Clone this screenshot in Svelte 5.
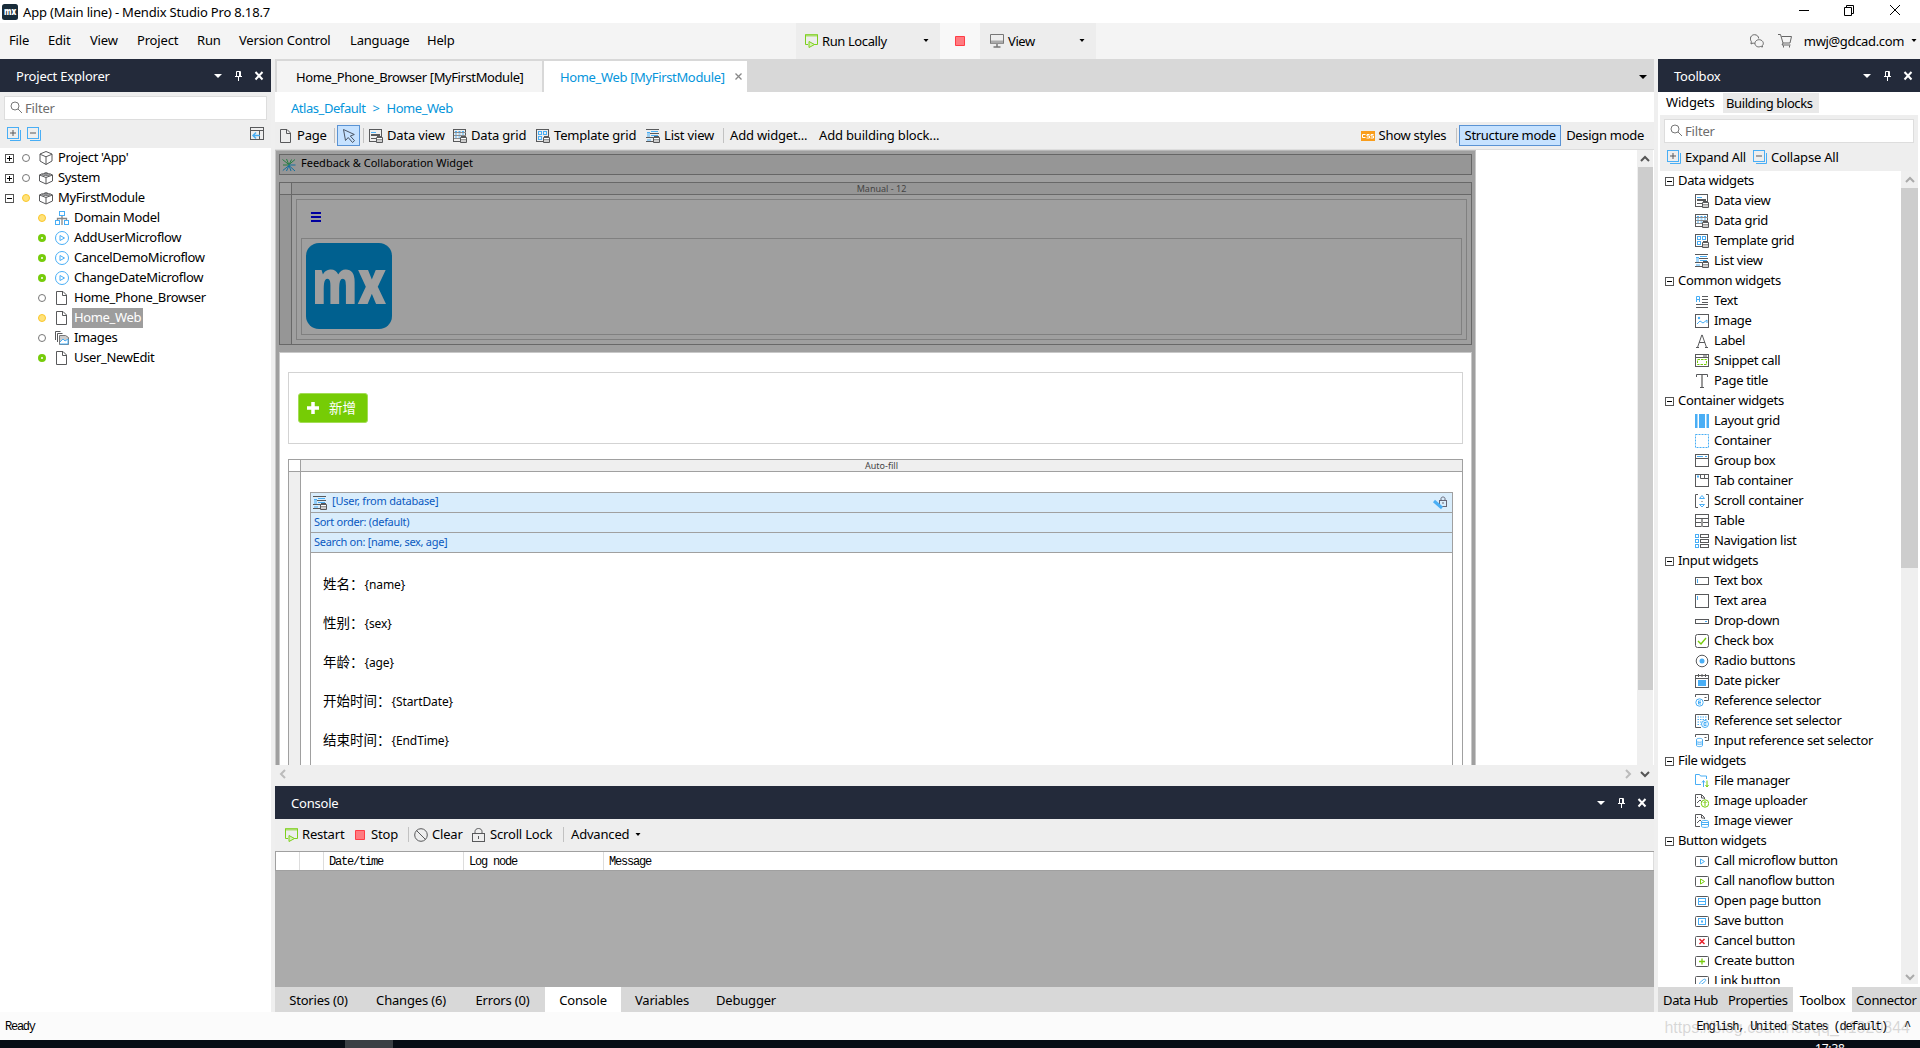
<script>
  // Icon bodies are drawn on a 14x14 pixel grid.
  const D = '#58595b', B = '#49aef5', G = '#76cc0a';
  const db = `<path d="M7.5 8.5h6v5h-6z" fill="#fff" stroke="${D}"/><path d="M8 10.5h5M8 12h5" stroke="#999"/><path d="M8 7.500h5" stroke="${D}"/>`;
  const r = (x, y, w, h, s = D, f = 'none') => `<rect x="${x}" y="${y}" width="${w}" height="${h}" stroke="${s}" fill="${f}"/>`;
  const p = (d, s = D, f = 'none', e = '') => `<path d="${d}" stroke="${s}" fill="${f}" ${e}/>`;
  const btn = r(.5, 2.5, 13, 10).replace('/>', ' rx="1"/>');
  const icons = {
    dataview: r(.5, .5, 12, 12) + p('M2 3.5h5', B) + p('M2 5.5h9M2 6.5h9M2 9.5h5') + db,
    datagrid: r(.5, .5, 12, 12) + p('M1 3.5h12M1 6.5h12M1 9.5h12', '#8a8b8d') + p('M2 2.5h9M2 5h9M2 8h9', B, 'none', 'stroke-dasharray="2 1.5"') + db,
    template: r(.5, .5, 12, 12) + r(2.5, 2.5, 3, 3, B) + r(7.5, 2.5, 3, 3, B) + r(2.5, 7.5, 3, 3, B) + db,
    list: p('M0 .5h13M4 4.5h9M0 8.5h8M0 12.5h7') + p('M1 3.5h3M1 5h3M1 7h3M5 2.5h7M5 6.5h7M1 11h4', B) + db,
    text: p('M7 2.5h6M7 5.5h6M7 8.5h6M1 10.5h12M1 13.5h12') + p('M1.5 8V2.5h3V8M1.5 5.5h3', B),
    image: r(.5, .5, 13, 13) + p('M2 10l3-3 3 2 4-3v3', B) + `<circle cx="4" cy="4" r="1.2" fill="${B}"/>`,
    label: p('M2.5 13.5L6.8 1h.4L11.5 13.5M4 8.5h6M1 13.5h3M10 13.5h3'),
    snippet: r(.5, .5, 13, 12) + p('M1 3.5h12M8 2h4') + p('M2.5 5.5h9v5h-9z', G, 'none', 'stroke-dasharray="2.5 1"'),
    title: p('M1.5 3V.5h11V3M5 13.5h4') + p('M7 1v12', '#999', 'none', 'stroke-width="2"'),
    layout: `<path d="M0 0h2.5v14H0zM4 0h6v14H4zM11.500 0H14v14h-2.500z" fill="${B}"/>`,
    container: p('M.5.5h13v13H.5z', B, 'none', 'stroke-dasharray="2 1"'),
    group: r(.5, .5, 13, 12) + p('M1 4.500h12') + p('M2 2.500h6M10 2.500h2', B),
    tab: r(.5, .5, 13, 12) + p('M5.500 1v3.500h8M9.500 1v3') + p('M2 2.5h2', B, 'none', 'stroke-width="2"'),
    scroll: p('M3 .5H.5v13H3M11 .5h2.500v13H11') + p('M4.500 4.500L7 1.500l2.500 3zM4.500 10.500h5L7 13z', B) + p('M6.500 7.500h1'),
    table: r(.5, .5, 13, 12) + p('M1 4.500h12M1 8.500h12') + p('M7 5v8', '#999', 'none', 'stroke-width="2"'),
    nav: r(.5, .5, 3, 3, B) + r(.5, 5.5, 3, 3, B) + r(.5, 10.5, 3, 3, B) + r(5.5, .5, 8, 3) + r(5.5, 5.5, 8, 3) + r(5.5, 10.5, 8, 3),
    textbox: r(.5, 3.5, 13, 7) + p('M2.500 5v4', B),
    area: r(.5, .5, 13, 13) + p('M2.500 2v4', B),
    drop: r(.5, 5.5, 13, 4) + p('M10 7.500h2', B),
    check: r(.5, .5, 13, 13).replace('/>', ' rx="2"/>') + p('M3 7l3 3 5-6', G, 'none', 'stroke-width="1.4"'),
    radio: `<circle cx="7" cy="7" r="5.800" fill="none" stroke="${D}"/><circle cx="7" cy="7" r="2.500" fill="${B}"/>`,
    date: r(.5, 1.5, 13, 12) + p('M1 4.500h12M3.500 0v3M7 0v3M10.500 0v3') + `<path d="M3 6h8v6H3z" fill="${B}"/>`,
    ref: p('M.5 3V.5h13v6H9M9.500 3.500h2') + `<circle cx="4.500" cy="8.500" r="3.700" fill="#fff" stroke="${B}"/>` + p('M6 7H3.500v3H6M4 8.500h2', B),
    refset: p('M6 13.500H.5V.5h13V6') + p('M2.500 3h9M2.500 5.500h9M2.500 8h4M2.500 10.500h3', B, 'none', 'stroke-dasharray="1.500 1"') + `<circle cx="10" cy="10" r="3.500" fill="#fff" stroke="${B}"/>` + p('M11.500 8.500H9v3h2.500M9.500 10h2', B),
    inref: p('M.5 3V.5h13v6H10M9.500 3.500h2') + p('M1.500 5.500c0-1.500 6-1.500 6 0v6c0 1.500-6 1.500-6 0zM1.500 7.500c1 1 5 1 6 0M1.500 9.500c1 1 5 1 6 0', B),
    file: p('M6 10.500H.5V.5h4l1 1.500h6V5', B) + p('M8.500 13V7M7 8.500l1.500-2 1.500 2', B) + p('M12 6.500v6M10.500 11l1.500 2 1.500-2', G),
    upload: p('M5 12.500H.5V.5h6l3 3V5M6.500 1v3h3M2 9l3-3 2 2M2 3.500h1') + `<circle cx="10" cy="9.500" r="3.700" fill="#fff" stroke="${G}"/>` + p('M10 12V7.500M8.500 9l1.500-1.500L11.500 9', G),
    viewer: p('M5 12.500H.5V.5h6l3 3V5M6.500 1v3h3M2 9l3-3 2 2M2 3.500h1') + `<path d="M6.500 7.500c0-1.500 7-1.500 7 0v5c0 1.200-7 1.200-7 0z" fill="#fff" stroke="${B}"/>` + p('M6.500 8.500h7M6.500 10.500h7', B),
    micro: btn + p('M5.500 5l4 2.500-4 2.500z', B),
    nano: btn + p('M5.500 5l4 2.500-4 2.500z', G),
    open: btn + r(3.5, 4.5, 7, 6, B) + p('M4 7.500h6', B),
    save: btn + r(3.5, 4.5, 7, 6, B) + p('M6 7.500h2', B, 'none', 'stroke-width="2"'),
    cancel: btn + p('M4.500 5l5 5M9.500 5l-5 5', '#e8202a', 'none', 'stroke-width="1.500"'),
    create: btn + p('M7 4.500v6M4 7.500h6', G, 'none', 'stroke-width="1.300"'),
    link: btn + p('M5.500 8l3-2.500c2-1 3 .5 1.500 2L7 10c-2 1-3.500-.5-1.500-2z', B),
    page: p('M1.500.5h6.500l3.500 3.500v9.500h-10zM7.500 1v3.500h4', D),
    module: p('M7 .5L13 3v7l-6 3.500L1 10V3zM1 3.200l6 2.600 6-2.600M7 6v7.500', D),
    brick: p('M.5 4l6.500 2.500L13.500 4v6l-6.500 3-6.500-3zM7 6.500V13M.5 4l3-1.500M13.500 4l-3-1.500', D) + `<path d="M3 3.500c0-1.200 3.500-1.200 3.500 0v1.200L3 4zM7.500 3.500c0-1.200 3.500-1.200 3.500 0V4L7.500 5zM5 2.500c0-1.200 4-1.200 4 0z" fill="#aaa" stroke="${D}" stroke-width=".7"/>`,
    domain: r(4.5, .5, 5, 4, B) + r(.5, 9.5, 4, 4, B) + r(9.5, 9.5, 4, 4, B) + p('M7 5v3M2.500 9V7.500h9V9M7 8v6', '#888', 'none', 'stroke-width="1.300"'),
    flow: `<circle cx="7" cy="7" r="6.500" fill="none" stroke="${B}"/>` + p('M5 4.500L9.500 7 5 9.500z', B),
    images: p('M.5 9V.5h5M2.500 11V2.500h5') + `<path d="M4.500 4.500h6l3 2v7h-9z" fill="#ccc" stroke="#777"/>` + p('M5 11l3-3 2 2 3-2v5H5', B, '#fff'),
    expand: p('M3 13.500h10.500V3', B) + r(.5, .5, 11, 11, B) + p('M3 6h6M6 3v6'),
    collapse: p('M3 13.500h10.500V3', B) + r(.5, .5, 11, 11, B) + p('M3 6h6'),
    search: `<circle cx="5" cy="5" r="4" fill="none" stroke="#777"/>` + p('M8 8l4 4', '#777'),
    locate: r(.5, .5, 13, 12) + p('M1 3.500h12M9.500 4v8') + p('M3 8.500h7M6 5.500l-3 3 3 3', B, 'none', 'stroke-width="1.500"'),
    run: p('M3 10.500H.5v-10h12v10H9', '#7dcf1c') + p('M1 1.500h11', '#a8dc68', 'none', 'stroke-width="2"') + p('M4 7.500l5.500 3L4 13.500z', '#7dcf1c', '#d6f2b4'),
    stop: `<path d="M2.500 2.500h9v9h-9z" fill="#ff7b80" stroke="#ff3d46"/>`,
    monitor: p('M.5.5h13v9H.5z', '#777', '#eee') + p('M1 8h12', '#aaa', 'none', 'stroke-width="3"') + p('M7 10v3M3.500 13h7', '#777', 'none', 'stroke-width="1.500"'),
    cursor: p('M1.500.5l2 11 2.700-3 4.300 5 2-1.800-4.200-4.700 4-1.500z', '#4b5563'),
    css: `<path d="M0 2h14v10H0z" fill="#f99d1c"/>` + p('M4.500 5.500H1.500v3h3M8.500 5.500H6V7h2.500v2H5.500M12.500 5.500H10V7h2.500v2H9.500', '#fff'),
    chat: p('M3 9L1 10l.3-2.500C-.8 4.500 1 .7 4.500.7c2.500 0 4.200 1.800 4.200 3.800M3 9c1 .5 2 .3 2 .3', '#666') + p('M12.500 13l-2-.5c-3 1.300-6-.8-5.500-3.800.8-3.500 5.800-4 7.700-1.200 1 1.500.8 3-.5 4.200z', '#666'),
    cart: p('M0 .5h2.500L5 9h7l1.500-6.500h-10M5 9l-1 2h8.500', '#666') + p('M5 12.500h1M11 12.500h1', '#666', 'none', 'stroke-width="2"'),
    clear: `<circle cx="7" cy="7" r="6.300" fill="none" stroke="${D}"/>` + p('M2.500 2.500l9 9'),
    lock: r(.5, 5.5, 12, 8) + p('M3 5.500V3.500c0-4 7-4 7 0v2M6.500 8v3'),
    star: p('M6.800 6.500L.5 1.500M6.800 6.500L4.500 1M7.200 6.500L13 1.500M7.200 6.500L9.500 1.500M6.500 7H1', '#267d43') + p('M7 7h6.500M7 7.500l6 5.500M7 7.500l2 5.500M7 7.500L4.500 13M7 7.500L.8 12.500', '#156f9d'),
    editlock: r(6.5, 4.5, 7, 6, '#667') + p('M8 4.500V2.500c0-2 4-2 4 0v2M10 6v2', '#667') + p('M1 5l8 7', B, 'none', 'stroke-width="3"'),
    menu: `<path d="M0 0h10v2H0zM0 4h10v2H0zM0 8h10v2H0z" fill="#00009f"/>`
  };

  const menus = [['File', 39], ['Edit', 42], ['View', 47], ['Project', 60], ['Run', 42], ['Version Control', 111], ['Language', 77], ['Help', 40]];
  const roots = [['Project \'App\'', 'module', 'none', '+'], ['System', 'brick', 'none', '+'], ['MyFirstModule', 'brick', 'yellow', '-']];
  const docs = [
    ['Domain Model', 'domain', 'yellow'], ['AddUserMicroflow', 'flow', 'green'], ['CancelDemoMicroflow', 'flow', 'green'],
    ['ChangeDateMicroflow', 'flow', 'green'], ['Home_Phone_Browser', 'page', 'none'], ['Home_Web', 'page', 'yellow'],
    ['Images', 'images', 'none'], ['User_NewEdit', 'page', 'green']
  ];
  const tools = [['Data view', 'dataview', 84], ['Data grid', 'datagrid', 83], ['Template grid', 'template', 110], ['List view', 'list', 77]];
  const groups = [
    ['Data widgets', [['Data view', 'dataview'], ['Data grid', 'datagrid'], ['Template grid', 'template'], ['List view', 'list']]],
    ['Common widgets', [['Text', 'text'], ['Image', 'image'], ['Label', 'label'], ['Snippet call', 'snippet'], ['Page title', 'title']]],
    ['Container widgets', [['Layout grid', 'layout'], ['Container', 'container'], ['Group box', 'group'], ['Tab container', 'tab'], ['Scroll container', 'scroll'], ['Table', 'table'], ['Navigation list', 'nav']]],
    ['Input widgets', [['Text box', 'textbox'], ['Text area', 'area'], ['Drop-down', 'drop'], ['Check box', 'check'], ['Radio buttons', 'radio'], ['Date picker', 'date'], ['Reference selector', 'ref'], ['Reference set selector', 'refset'], ['Input reference set selector', 'inref']]],
    ['File widgets', [['File manager', 'file'], ['Image uploader', 'upload'], ['Image viewer', 'viewer']]],
    ['Button widgets', [['Call microflow button', 'micro'], ['Call nanoflow button', 'nano'], ['Open page button', 'open'], ['Save button', 'save'], ['Cancel button', 'cancel'], ['Create button', 'create'], ['Link button', 'link']]]
  ];
  const fields = [['姓名：', '{name}'], ['性别：', '{sex}'], ['年龄：', '{age}'], ['开始时间：', '{StartDate}'], ['结束时间：', '{EndTime}']];
  const bottomTabs = [['Stories (0)', 87], ['Changes (6)', 98], ['Errors (0)', 85], ['Console', 76], ['Variables', 82], ['Debugger', 86]];
</script>

{#snippet icon(name)}
  <svg class="ico" width="14" height="14" viewBox="0 0 14 14">{@html icons[name]}</svg>
{/snippet}
{#snippet caret()}<svg class="caret" width="6" height="4" viewBox="0 0 6 4"><path d="M.5 0h5L3 3z" fill="#000" /></svg>{/snippet}
{#snippet chevron(d, c)}
  <svg width="12" height="12" viewBox="0 0 12 12"><path {d} fill="none" stroke={c} stroke-width="2" /></svg>
{/snippet}
{#snippet panelHead(title)}
  <header class="phead">
    <span class="ptitle">{title}</span>
    <svg width="52" height="12" viewBox="0 0 52 12">
      <path d="M1 4h8L5 8z" fill="#fff" />
      <path d="M23.500 1.500h4v5h-4zM22 6.500h7M25.500 7v4M26.500 2v4" fill="none" stroke="#fff" />
      <path d="M42.500 2l7 7.500M49.500 2l-7 7.500" fill="none" stroke="#fff" stroke-width="2" />
    </svg>
  </header>
{/snippet}

<div class="window">
  <div class="titlebar">
    <svg class="app" width="16" height="16" viewBox="0 0 16 16">
      <rect width="16" height="16" rx="2.500" fill="#182b39" />
      <text x="2" y="11" textLength="12" lengthAdjust="spacingAndGlyphs" font-family="Open Sans" font-weight="800" font-size="10" fill="#fff">mx</text>
    </svg>
    <span class="wtitle">App (Main line) - Mendix Studio Pro 8.18.7</span>
    <svg class="winctl" width="112" height="14" viewBox="0 0 112 14" fill="none" stroke="#000">
      <path d="M0 7.500h10M45.500 4.500h7v8h-7zM47.500 4V2.500h7v8H53M91 2l10 10M101 2L91 12" />
    </svg>
  </div>

  <div class="menubar">
    <nav>{#each menus as [m, w]}<span style:width="{w}px">{m}</span>{/each}</nav>
    <div class="runbox">{@render icon('run')}<span>Run Locally</span>{@render caret()}</div>
    <div class="stopbox">{@render icon('stop')}</div>
    <div class="viewbox">{@render icon('monitor')}<span>View</span>{@render caret()}</div>
    <div class="account">{@render icon('chat')}{@render icon('cart')}<span>mwj@gdcad.com</span>{@render caret()}</div>
  </div>

  <main>
    <aside class="explorer">
      {@render panelHead('Project Explorer')}
      <div class="exptools">
        <div class="filter">{@render icon('search')}<span>Filter</span></div>
        <div class="expicons">{@render icon('expand')}{@render icon('collapse')}<i></i>{@render icon('locate')}</div>
      </div>
      <div class="tree">
        {#each roots as [name, ic, dot, sign]}
          <div class="node"><b class="box" class:plus={sign === '+'}></b><b class="dot {dot}"></b>{@render icon(ic)}<span>{name}</span></div>
        {/each}
        {#each docs as [name, ic, dot]}
          <div class="node child"><b class="dot {dot}"></b>{@render icon(ic)}<span class:selected={name === 'Home_Web'}>{name}</span></div>
        {/each}
      </div>
    </aside>

    <section class="center">
      <div class="tabs">
        <div class="tab first">Home_Phone_Browser [MyFirstModule]</div>
        <div class="tab active">Home_Web [MyFirstModule]<svg width="7" height="7" viewBox="0 0 7 7"><path d="M.5.5l6 6M6.500.5l-6 6" stroke="#888" stroke-width="1.300" /></svg></div>
        <svg class="more" width="8" height="4" viewBox="0 0 8 4"><path d="M0 0h8L4 4z" /></svg>
      </div>
      <div class="crumbs"><span>Atlas_Default</span><em>&gt;</em><span>Home_Web</span></div>
      <div class="toolbar">
        <div class="pagebtn">{@render icon('page')}<span>Page</span></div>
        <i class="sep"></i>
        <div class="cursor">{@render icon('cursor')}</div>
        <i class="sep"></i>
        {#each tools as [t, ic, w]}<div class="tool" style:width="{w}px">{@render icon(ic)}<span>{t}</span></div>{/each}
        <i class="sep"></i>
        <span class="addw">Add widget...</span><span class="addb">Add building block...</span>
        <div class="modes">
          <div class="styles">{@render icon('css')}<span>Show styles</span></div>
          <i class="sep"></i>
          <b class="mode">Structure mode</b><span class="design">Design mode</span>
        </div>
      </div>

      <div class="editor">
        <div class="canvas">
          <div class="page">
            <div class="layout">
              <div class="feedback">{@render icon('star')}<span>Feedback &amp; Collaboration Widget</span></div>
              <div class="region dark">
                <div class="corner"></div><div class="cap">Manual - 12</div>
                <div class="strip"></div>
                <div class="outer">
                  <svg class="burger" width="10" height="10" viewBox="0 0 10 10">{@html icons.menu}</svg>
                  <div class="inner">
                    <svg width="86" height="86" viewBox="0 0 86 86">
                      <rect width="86" height="86" rx="13" fill="#00608f" />
                      <text x="6" y="61" textLength="74" lengthAdjust="spacingAndGlyphs" font-family="Open Sans" font-weight="800" font-size="62" fill="#9f9f9f">mx</text>
                    </svg>
                  </div>
                </div>
              </div>
            </div>
            <div class="body">
              <div class="actions"><div class="add"><svg width="12" height="12" viewBox="0 0 12 12"><path d="M6 0v12M0 6h12" stroke="#fff" stroke-width="3.500" /></svg><span>新增</span></div></div>
              <div class="region light">
                <div class="corner"></div><div class="cap">Auto-fill</div>
                <div class="strip"></div>
                <div class="content">
                  <div class="listview">
                    <div class="lv">{@render icon('list')}<span>[User, from database]</span><i></i>{@render icon('editlock')}</div>
                    <div class="lv sub">Sort order: (default)</div>
                    <div class="lv sub">Search on: [name, sex, age]</div>
                    <div class="fields">
                      {#each fields as [l, v]}<div class="field"><span>{l}</span>{v}</div>{/each}
                    </div>
                  </div>
                </div>
              </div>
            </div>
          </div>
          <div class="vscroll">{@render chevron('M2 8l4-4 4 4', '#555')}<i></i></div>
        </div>
        <div class="hscroll">
          {@render chevron('M8 2L4 6l4 4', '#bbb')}<i></i>{@render chevron('M4 2l4 4-4 4', '#bbb')}<u></u>{@render chevron('M2 4l4 4 4-4', '#555')}
        </div>
      </div>

      <div class="console">
        {@render panelHead('Console')}
        <div class="ctools">
          {@render icon('run')}<span class="restart">Restart</span>{@render icon('stop')}<span class="stop">Stop</span><i class="sep"></i>
          {@render icon('clear')}<span class="clear">Clear</span>{@render icon('lock')}<span class="slock">Scroll Lock</span><i class="sep"></i>
          <span class="adv">Advanced</span>{@render caret()}
        </div>
        <div class="grid"><span></span><span></span><span>Date/time</span><span>Log node</span><span>Message</span></div>
        <div class="log"></div>
        <div class="btabs">{#each bottomTabs as [t, w]}<span class:on={t === 'Console'} style:width="{w}px">{t}</span>{/each}</div>
      </div>
    </section>

    <aside class="toolbox">
      {@render panelHead('Toolbox')}
      <div class="wtabs"><span class="on">Widgets</span><span class="off">Building blocks</span></div>
      <div class="wtools">
        <div class="filter">{@render icon('search')}<span>Filter</span></div>
        <div class="ec">{@render icon('expand')}<span class="ea">Expand All</span>{@render icon('collapse')}<span>Collapse All</span></div>
      </div>
      <div class="wbody">
        <div class="wlist">
          {#each groups as [g, items]}
            <div class="grp"><b class="box"></b><span>{g}</span></div>
            {#each items as [n, ic]}<div class="item">{@render icon(ic)}<span>{n}</span></div>{/each}
          {/each}
        </div>
        <div class="wscroll">{@render chevron('M2 8l4-4 4 4', '#aaa')}<i></i><u></u>{@render chevron('M2 4l4 4 4-4', '#aaa')}</div>
      </div>
      <div class="wfoot"><span class="dh">Data Hub</span><span class="pr">Properties</span><span class="tb">Toolbox</span><span class="cn">Connector</span></div>
    </aside>
  </main>

  <footer class="status"><span>Ready</span><span class="lang">English, United States (default)</span><span class="up">^</span><span class="mark">https://blog.csdn.net/qq_41820844</span></footer>
  <div class="taskbar"><i></i><span>17:38</span></div>
</div>

<style>
  :global(body) { margin: 0; overflow: hidden; }
  .window { width: 1920px; height: 1048px; overflow: hidden; display: flex; flex-direction: column; background: #fff; color: #000;
    font: 13px/20px "Noto Sans", "Noto Sans CJK SC", sans-serif; letter-spacing: -.18px; white-space: nowrap; }
  .window :global(svg) { flex: none; display: block; }
  .window, .window :global(*) { box-sizing: border-box; }
  .titlebar { height: 23px; flex: none; display: flex; align-items: center; padding-left: 2px; }
  .wtitle { margin: 0 auto 0 5px; }
  .titlebar .winctl { margin: 0 9px 3px 0; }
  .menubar { height: 36px; flex: none; display: flex; background: #f4f4f4; line-height: 35px; }
  nav { display: flex; padding-left: 9px; width: 796px; }
  .menubar div { display: flex; align-items: center; }
  .menubar .runbox { width: 144px; background: #ededed; padding-left: 9px; letter-spacing: -.4px; }
  .runbox span { margin-left: 3px; width: 101px; }
  .stopbox { width: 40px; background: #f8f8f8; justify-content: center; }
  .menubar .viewbox { width: 116px; background: #ededed; padding-left: 10px; letter-spacing: -.4px; }
  .viewbox span { margin-left: 4px; width: 71px; }
  .account { margin-left: auto; padding-right: 3px; gap: 14px; letter-spacing: -.35px; }
  .account span { margin-left: -2px; margin-right: -7px; }
  main { height: 953px; flex: none; display: flex; background: #efefef; }
  .phead { height: 33px; flex: none; background: #232a3a; color: #fff; display: flex; align-items: center; justify-content: space-between; padding: 0 6px 0 16px; letter-spacing: -.2px; }
  .explorer { width: 271px; background: #fff; margin-right: 4px; }
  .exptools { height: 56px; background: #eee; padding: 4px 4px 0; }
  .filter { height: 24px; background: #fff; border: 1px solid #ddd; display: flex; align-items: center; padding-left: 5px; gap: 1px; color: #6d6d6d; }
  .expicons { display: flex; gap: 6px; padding: 7px 3px 0; }
  .expicons i { flex: 1; }
  .tree { letter-spacing: -.35px; }
  .node { height: 20px; display: flex; align-items: center; padding-left: 5px; }
  .box { width: 9px; height: 9px; border: 1px solid #555; flex: none; background: linear-gradient(#000, #000) 1px 3px / 5px 1px no-repeat; }
  .box.plus { background: linear-gradient(#000, #000) 1px 3px / 5px 1px no-repeat, linear-gradient(#000, #000) 3px 1px / 1px 5px no-repeat; }
  .dot { width: 8px; height: 8px; border-radius: 50%; border: 1px solid #777; margin: 0 9px 0 8px; flex: none; }
  .dot.yellow { background: #ffe27a; border-color: #fac72b; }
  .dot.green { border: 3px solid #76cc0a; background: #fff; }
  .node span { margin-left: 3px; padding: 0 2px; line-height: 18px; height: 20px; }
  .node.child { padding-left: 30px; }
  .node .selected { background: #9d9d9d; color: #fff; }
  .center { width: 1379px; margin-right: 4px; display: flex; flex-direction: column; }
  .tabs { height: 33px; flex: none; background: #d8d8d8; padding: 2px 7px 0 2px; display: flex; align-items: center; letter-spacing: -.4px; }
  .tab { height: 31px; line-height: 33px; background: #f4f4f4; padding-left: 19px; width: 265px; margin-right: 2px; }
  .tab.active { width: 203px; background: #fff; color: #0595db; padding: 0 5px 0 16px; display: flex; letter-spacing: -.35px; }
  .tab.active svg { margin: 12px 0 0 auto; }
  .more { margin-left: auto; }
  .crumbs { height: 30px; flex: none; background: #fff; color: #0595db; line-height: 32px; padding-left: 16px; letter-spacing: -.45px; }
  .crumbs em { font-style: normal; margin: 0 7px; }
  .toolbar { height: 28px; flex: none; background: #eee; display: flex; align-items: center; border-bottom: 1px solid #ddd; padding-left: 4px; }
  .toolbar div { display: flex; align-items: center; }
  .toolbar span { margin-top: -1px; }
  .toolbar .pagebtn { width: 55px; gap: 4px; }
  .sep { width: 1px; height: 15px; background: #c2c2c2; flex: none; }
  .toolbar .cursor { width: 23px; height: 21px; background: #c6e2ff; border: 1px solid #5a93d4; justify-content: center; margin: 0 3px 0 2px; }
  .toolbar .tool { gap: 4px; }
  .cursor + .sep { margin-right: 5px; }
  .toolbar .addw { margin: -1px 12px 0 6px; width: 77px; }
  .toolbar .modes { margin-left: auto; letter-spacing: -.3px; }
  .toolbar .styles { gap: 4px; margin-right: 10px; }
  .mode { height: 21px; line-height: 18px; width: 102px; background: #c6e2ff; border: 1px solid #5a93d4; text-align: center; margin-left: 2px; font-weight: normal; }
  .toolbar .design { margin: -1px 10px 0 5px; }
  .editor { height: 636px; flex: none; display: flex; flex-direction: column; }
  .canvas { height: 615px; margin-bottom: 1px; display: flex; justify-content: space-between; background: #fff; overflow: hidden; }
  .page { width: 1201px; height: 650px; background: #9f9f9f; border: 1px solid #c8c8c8; border-top-color: #b8b8b8; padding: 0 3px; }
  .layout { height: 201px; padding-top: 3px; }
  .feedback { height: 21px; border: 1px solid #666; background: #969696; font-size: 11px; line-height: 18px; letter-spacing: 0; display: flex; align-items: center; gap: 5px; padding-left: 2px; }
  .feedback span { margin-top: -3px; }
  .region { display: grid; grid-template: 12px 1fr / 12px 1fr; border: 1px solid; border-color: var(--l); }
  .dark { --l: #686868; --f: #969696; height: 163px; margin-top: 7px; }
  .light { --l: #a0a0a0; --f: #efefef; height: 400px; margin-top: 15px; }
  .corner, .cap { border-bottom: 1px solid var(--l); }
  .corner, .strip { border-right: 1px solid var(--l); }
  .strip, .cap { background: var(--f); }
  .cap { font-size: 9px; line-height: 11px; text-align: center; color: #444; letter-spacing: 0; }
  .outer { margin: 4px 4px 4px 4px; border: 1px solid #808080; height: 141px; padding: 12px 4px 0; }
  .burger { margin-left: 10px; }
  .inner { border: 1px solid #808080; height: 97px; margin-top: 16px; padding: 4px; }
  .body { background: #fff; border: 1px solid #c8c8c8; height: 450px; padding: 19px 8px 0; }
  .actions { height: 72px; border: 1px solid #d3d3d3; padding: 20px 9px; }
  .add { width: 70px; height: 30px; border-radius: 3px; border: 1px solid #a3dd55; background: #76cc05; color: #fff; display: flex; align-items: center; padding: 0 0 1px 8px; gap: 10px; font-size: 13.500px; letter-spacing: 0; }
  .content { padding: 20px 9px 0; }
  .listview { border: 1px solid #a0a0a0; height: 380px; }
  .lv { height: 20px; background: #d9edfc; border-bottom: 1px solid #a0a0a0; color: #0a59c0; font-size: 11px; line-height: 18px; padding-left: 3px; display: flex; align-items: center; letter-spacing: -.2px; }
  .lv.sub { padding-bottom: 2px; letter-spacing: -.3px; }
  .lv span { margin: -3px 0 0 5px; }
  .lv i { flex: 1; }
  .lv :global(svg:last-child) { margin-right: 5px; }
  .lv :global(svg:first-child) { margin-left: -1px; }
  .fields { padding: 11px 12px; font-size: 12px; letter-spacing: -.1px; }
  .field { height: 39px; line-height: 39px; }
  .field span { font-family: "Noto Sans CJK SC", sans-serif; font-size: 13.500px; letter-spacing: 0; margin-right: 1px; }
  .vscroll { width: 16px; background: #efefef; display: flex; flex-direction: column; align-items: center; padding-top: 3px; margin-right: 1px; }
  .vscroll i { width: 15px; height: 523px; flex: none; background: #cdcdcd; margin-top: 2px; }
  .hscroll { height: 16px; background: #efefef; display: flex; align-items: center; padding: 0 3px 0 2px; }
  .hscroll i { flex: 1; }
  .hscroll u { width: 5px; }
  .ctools { height: 32px; background: #eee; display: flex; align-items: center; padding: 0 0 1px 10px; }
  .ctools span { margin: -1px 0 0 4px; }
  .ctools .restart { width: 51px; margin-left: 3px; } .stop { width: 37px; } .clear { width: 40px; } .slock { width: 73px; }
  .ctools .adv { width: 64px; margin-left: 2px; }
  .ctools .sep { margin-right: 5px; }
  .grid { height: 20px; border-top: 1px solid #a0a0a0; border-left: 1px solid #a0a0a0; border-bottom: 1px solid #a0a0a0; background: #fff; display: grid; grid-template: 18px / 24px 24px 140px 140px 1fr; font: 12px/20px "Liberation Mono", monospace; }
  .grid span { border-right: 1px solid #ddd; padding-left: 5px; letter-spacing: -1.200px; }
  .log { height: 116px; background: #ababab; }
  .btabs { height: 25px; background: #d8d8d8; display: flex; line-height: 26px; text-align: center; }
  .btabs .on { background: #fff; }
  .toolbox { width: 262px; display: flex; flex-direction: column; background: #fff; }
  .wtabs { height: 23px; flex: none; display: flex; line-height: 21px; padding-top: 1px; }
  .wtabs .on { width: 65px; padding-left: 8px; line-height: 19px; }
  .wtabs .off { width: 96px; height: 20px; background: #e9e9e9; padding-left: 3px; line-height: 21px; letter-spacing: -.4px; }
  .wtools { height: 56px; background: #eee; margin: 0 2px; padding: 4px; }
  .ec { display: flex; align-items: center; height: 28px; padding-left: 3px; letter-spacing: -.2px; }
  .ec span { margin-left: 4px; }
  .ec .ea { width: 68px; letter-spacing: -.3px; }
  .wbody { height: 814px; display: flex; overflow: hidden; background: #fff; letter-spacing: -.33px; }
  .wlist { flex: 1; }
  .grp { height: 20px; display: flex; align-items: center; gap: 4px; padding-left: 7px; }
  .item { height: 20px; display: flex; align-items: center; gap: 5px; padding-left: 37px; }
  .grp span, .item span { margin-top: -2px; }
  .wscroll { width: 17px; margin-right: 2px; background: #efefef; display: flex; flex-direction: column; align-items: center; padding: 3px 0 1px; }
  .wscroll i { width: 17px; height: 380px; flex: none; background: #cdcdcd; margin-top: 2px; }
  .wscroll u { flex: 1; }
  .wfoot { height: 25px; background: #d8d8d8; margin-top: 3px; display: flex; line-height: 26px; overflow: hidden; letter-spacing: -.35px; }
  .dh { width: 70px; padding-left: 5px; } .pr { width: 65px; } .tb { width: 59px; background: #fff; text-align: center; } .cn { padding-left: 4px; }
  .status { height: 28px; flex: none; background: #fbfbfb; position: relative; font: 12px/30px "Liberation Mono", monospace; letter-spacing: -1.250px; padding-left: 5px; display: flex; }
  .lang { margin-left: auto; } .up { margin: 0 10px 0 17px; }
  .mark { position: absolute; right: 10px; top: 3px; font: 16px/26px "Liberation Sans", sans-serif; color: rgba(120, 120, 120, .28); letter-spacing: 0; }
  .taskbar { height: 8px; background: #070c14; display: flex; overflow: hidden; }
  .taskbar i { width: 48px; margin-left: 345px; background: #3b3f44; }
  .taskbar span { margin-left: 1422px; color: #fff; font-size: 12px; line-height: 17px; }
</style>
